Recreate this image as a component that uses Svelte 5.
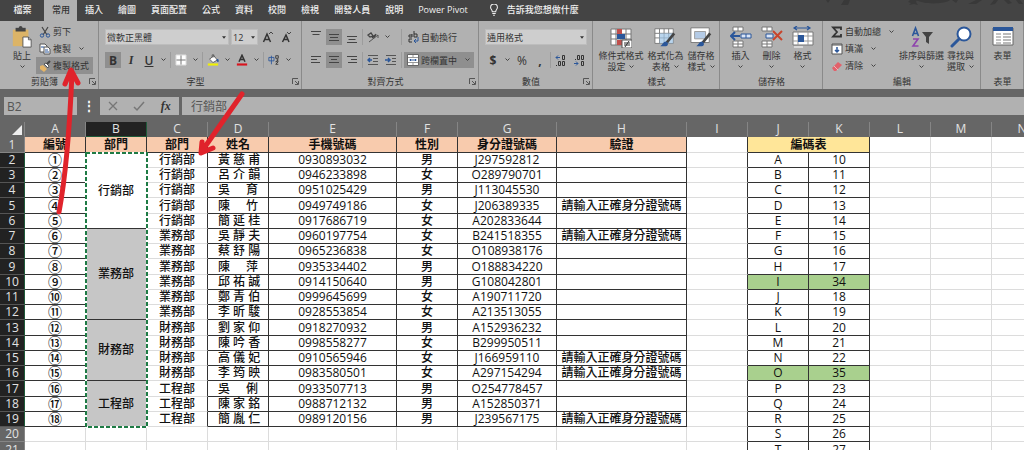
<script>
    const tabs = ['檔案', '常用', '插入', '繪圖', '頁面配置', '公式', '資料', '校閱', '檢視', '開發人員', '說明', 'Power Pivot']
    const columns = ['A', 'B', 'C', 'D', 'E', 'F', 'G', 'H', 'I', 'J', 'K', 'L', 'M', 'N']
    const wrong = '請輸入正確身分證號碼'

    const people = [
        ['①', '行銷部', '黃 慈 甫', '0930893032', '男', 'J297592812', ''],
        ['②', '行銷部', '呂 介 韻', '0946233898', '女', 'O289790701', ''],
        ['③', '行銷部', '吳 育', '0951025429', '男', 'J113045530', ''],
        ['④', '行銷部', '陳 竹', '0949749186', '女', 'J206389335', wrong],
        ['⑤', '行銷部', '簡 延 桂', '0917686719', '女', 'A202833644', ''],
        ['⑥', '業務部', '吳 靜 夫', '0960197754', '女', 'B241518355', wrong],
        ['⑦', '業務部', '蔡 舒 陽', '0965236838', '女', 'O108938176', ''],
        ['⑧', '業務部', '陳 萍', '0935334402', '男', 'O188834220', ''],
        ['⑨', '業務部', '邱 祐 誠', '0914150640', '男', 'G108042801', ''],
        ['⑩', '業務部', '鄭 青 伯', '0999645699', '女', 'A190711720', ''],
        ['⑪', '業務部', '李 昕 駿', '0928553854', '女', 'A213513055', ''],
        ['⑫', '財務部', '劉 家 仰', '0918270932', '男', 'A152936232', ''],
        ['⑬', '財務部', '陳 吟 香', '0998558277', '女', 'B299950511', ''],
        ['⑭', '財務部', '高 儀 妃', '0910565946', '女', 'J166959110', wrong],
        ['⑮', '財務部', '李 筠 映', '0983580501', '女', 'A297154294', wrong],
        ['⑯', '工程部', '吳 俐', '0933507713', '男', 'O254778457', ''],
        ['⑰', '工程部', '陳 家 銘', '0988712132', '男', 'A152850371', ''],
        ['⑱', '工程部', '簡 胤 仁', '0989120156', '男', 'J239567175', wrong],
    ]

    // first row of each merged cell in column B
    const merged = { 0: 5, 5: 6, 11: 4, 15: 3 }

    const codes = [
        ['A', 10], ['B', 11], ['C', 12], ['D', 13], ['E', 14], ['F', 15], ['G', 16],
        ['H', 17], ['I', 34], ['J', 18], ['K', 19], ['L', 20], ['M', 21], ['N', 22],
        ['O', 35], ['P', 23], ['Q', 24], ['R', 25], ['S', 26], ['T', 27],
    ]

    const blue = '#2b579a'
    const gridIcon = '<path d="M1 3h20v16H1z" fill="#fff" stroke="#777"/><path d="M1 8h20M1 13h20M6 3v16M11 3v16M16 3v16" stroke="#777" fill="none"/>'
    const brush = `<path d="M22 8l-8 10" stroke="#444" stroke-width="3"/><path d="M7 22c2-1 3-5 6-5 3 1 3 5 0 5z" fill="${blue}"/>`

    const icons = {
        paste: ['0 0 22 24', '<path d="M1 4h17v18H1z" fill="#dcb467"/><path d="M4 2h11v4H4z" fill="#444"/><circle cx="9.500" cy="2" r="2" fill="#444"/><path d="M12 12h6l3 3v8h-9z" fill="#fff" stroke="#555"/><path d="M18 12v3h3" fill="none" stroke="#555"/>'],
        cut: ['0 0 12 12', `<path d="M3 1l5 8M9 1L4 9" stroke="#444" stroke-width="1.200"/><circle cx="3" cy="9.500" r="1.700" fill="none" stroke="${blue}"/><circle cx="9" cy="9.500" r="1.700" fill="none" stroke="${blue}"/>`],
        copy: ['0 0 12 12', `<path d="M1 1h5l2 2v6H1z" fill="#fff" stroke="#555"/><path d="M5 4h4l2 2v5H5z" fill="#fff" stroke="#555"/><path d="M6 7h3M6 9h4M2 4h3" stroke="${blue}"/>`],
        painter: ['0 0 12 12', '<path d="M1 6l3-1 4 4-3 3-4-3z" fill="#e5b567"/><path d="M5 4l4 4 1-2-3-3z" fill="#fff" stroke="#555"/><path d="M8 4l3-3" stroke="#444" stroke-width="2"/>'],
        borders: ['0 0 12 12', '<path d="M1 1h10v10H1z" fill="#fff"/><path d="M6 1v10M1 6h10" stroke="#777"/><path d="M1 1h10v10H1z" fill="none" stroke="#ddd"/>'],
        fill: ['0 0 14 14', '<path d="M3 6l5-4 4 5-5 3z" fill="#fff" stroke="#555"/><path d="M6 4V1h2v3" fill="none" stroke="#555"/><path d="M12 6l1 3" stroke="#2b579a" stroke-width="2"/><path d="M1 11h12v2.500H1z" fill="#f1f100"/>'],
        fontColor: ['0 0 14 14', '<path d="M3.500 9L7 1.500 10.500 9M5 6.500h4" fill="none" stroke="#333" stroke-width="1.800"/><path d="M1 11h12v2.500H1z" fill="#d9141e"/>'],
        phonetic: ['0 0 14 14', `<path d="M1 4h6v4H1zM4 2v10" fill="none" stroke="${blue}"/><path d="M9 2h3v3H9zM10 6l2 1-3 2h3l-3 3h3" fill="none" stroke="#333"/>`],
        grow: ['0 0 12 12', '<path d="M1.500 11L5 3l3.500 8M3 8.500h4" fill="none" stroke="#333" stroke-width="1.500"/><path d="M7 3l2-2 2 2" fill="none" stroke="#444"/>'],
        shrink: ['0 0 12 12', '<path d="M2.500 11L6 4l3 7M4 8.500h4" fill="none" stroke="#333" stroke-width="1.500"/><path d="M7 1l2 2 2-2" fill="none" stroke="#444"/>'],
        top: ['0 0 12 12', '<path d="M1 .5h10M2.500 3.500h7" stroke="#444"/>'],
        middle: ['0 0 12 12', '<path d="M1 3.500h10M2 6.500h8M1 9.500h10" stroke="#444"/>'],
        bottom: ['0 0 12 12', '<path d="M1 5.500h10M2.500 8.500h7M1 11.500h10" stroke="#444"/>'],
        left: ['0 0 12 12', '<path d="M1 2.500h10M1 5.500h6M1 8.500h9" stroke="#444"/>'],
        center: ['0 0 12 12', '<path d="M1 2.500h10M3 5.500h6M1 8.500h10" stroke="#444"/>'],
        right: ['0 0 12 12', '<path d="M1 2.500h10M5 5.500h6M2 8.500h9" stroke="#444"/>'],
        rotate: ['0 0 12 12', '<path d="M1 4l3-2 2 3-3 1zM5 7l3-3M7 7l2-4" fill="none" stroke="#444" stroke-width="1.300"/><path d="M2 11l9-7M11 4v3" fill="none" stroke="#555"/>'],
        outdent: ['0 0 12 12', `<path d="M1 1.500h10M6 4.500h5M6 7.500h5M1 10.500h10" stroke="#555"/><path d="M5 6H1M3 4L1 6l2 2" fill="none" stroke="${blue}" stroke-width="1.500"/>`],
        indent: ['0 0 12 12', `<path d="M1 1.500h10M7 4.500h4M7 7.500h4M1 10.500h10" stroke="#555"/><path d="M0 6h5M3 4l2 2-2 2" fill="none" stroke="${blue}" stroke-width="1.500"/>`],
        wrap: ['0 0 12 12', `<path d="M5 3v3H2V4h3M7 0v6h3V3H7M5 8H2v3h3" fill="none" stroke="#333"/><path d="M11 6v4H7M9 8l-2 2 2 2" fill="none" stroke="${blue}"/>`],
        merge: ['0 0 12 12', `<path d="M.5 .5h11v11H.5z" fill="#fff" stroke="#666"/><path d="M1 3.500h10M1 8.500h10M6 1v2M6 9v2" stroke="#999"/><path d="M2.500 6h7M4 5L3 6l1 1M8 5l1 1-1 1" fill="none" stroke="${blue}"/>`],
        incDecimal: ['0 0 12 12', `<path d="M1 3.500h4M3 1.500l-2 2 2 2" fill="none" stroke="${blue}"/><path d="M7.500 1.500h2v4h-2zM3.500 7.500h2v4h-2zM7.500 7.500h2v4h-2z" fill="none" stroke="#333"/><path d="M1 11.500h1" stroke="#333"/>`],
        decDecimal: ['0 0 12 12', `<path d="M1 9.500h4M3 7.500l2 2-2 2" fill="none" stroke="${blue}"/><path d="M4.500 1.500h2v4h-2zM8.500 1.500h2v4h-2zM8.500 7.500h2v4h-2z" fill="none" stroke="#333"/><path d="M2 5.500h1" stroke="#333"/>`],
        conditional: ['0 0 22 22', gridIcon + `<path d="M7 3h5v5H7zM7 14h5v5H7z" fill="#c0504d"/><path d="M7 8h8v5H7z" fill="${blue}"/><path d="M12 14h10v8H12z" fill="#fff" stroke="#555"/><path d="M14 17h6M14 19h6M19 15l-4 6" stroke="#333"/>`],
        tableFormat: ['0 0 24 24', gridIcon + `<path d="M6 8h15v11H6z" fill="#9dc3e6" opacity=".7"/>${brush}`],
        cellStyles: ['0 0 24 24', `<path d="M1 2h20v16H1z" fill="#fff" stroke="#777"/><path d="M5 6h12v8H5z" fill="#b4cbe6" stroke="#999"/>${brush}`],
        insert: ['0 0 22 22', `<path d="M3 1h10v4H3zM3 15h10v6H3zM8 1v4M8 15v6M3 18h10" fill="#fff" stroke="#777"/><path d="M11 8h10v4H11zM16 8v4" fill="#dbe5f5" stroke="${blue}"/><path d="M10 10H2M5 6l-4 4 4 4" fill="none" stroke="${blue}" stroke-width="2"/>`],
        remove: ['0 0 22 22', `<path d="M1 1h10v4H1zM1 15h10v6H1zM6 1v4M6 15v6M1 18h10" fill="#fff" stroke="#777"/><path d="M5 8h7v4H5z" fill="#dbe5f5" stroke="${blue}"/><path d="M12 5l9 9M21 5l-9 9" stroke="#c8452c" stroke-width="2"/>`],
        format: ['0 0 22 22', `<path d="M2 2h16M5 0L2 2l3 2M15 0l3 2-3 2" fill="none" stroke="${blue}" stroke-width="1.200"/><path d="M1 6h20v13H1z" fill="#fff" stroke="#777"/><path d="M1 10h20M1 15h20M6 6v13M16 6v13" stroke="#999"/><path d="M6 9h6v7H6z" fill="${blue}"/><path d="M2 21h9" stroke="#fff"/>`],
        sum: ['0 0 12 12', '<path d="M10 4V1.500H2L6 6l-4 4.500h8V8" fill="none" stroke="#333" stroke-width="1.800"/>'],
        fillDown: ['0 0 12 12', `<path d="M1 1h10v10H1z" fill="#fff" stroke="#555"/><path d="M1 2h10" stroke="#555"/><path d="M6 4v5M4 7l2 2 2-2" fill="none" stroke="${blue}" stroke-width="1.500"/>`],
        clear: ['0 0 12 12', '<path d="M1 8l6-6 4 3-6 6H3z" fill="#e2616b"/><path d="M3 6l4 4" stroke="#f3b4b8"/>'],
        sort: ['0 0 22 22', `<path d="M1.500 10L4.500 2l3 8M2.500 7.500h4" fill="none" stroke="${blue}" stroke-width="1.600"/><path d="M2 13h5l-5 7h5.500" fill="none" stroke="#8e44ad" stroke-width="1.600"/><path d="M11 6h11l-4 5v7l-3-2v-5z" fill="#444"/>`],
        find: ['0 0 22 22', `<circle cx="14" cy="8" r="6.500" fill="#fff" stroke="${blue}" stroke-width="2"/><path d="M9 13l-7 7" stroke="${blue}" stroke-width="3" stroke-linecap="round"/>`],
        form: ['0 0 22 22', `<path d="M1 2h20v17H1z" fill="#fff" stroke="#666"/><path d="M1 1h20v4H1z" fill="${blue}"/><path d="M4 8h5M4 11h5M4 14h5M4 17h5" stroke="#888"/><path d="M11 8h8M11 11h8M11 14h8M11 17h8" stroke="#bbb" stroke-width="2"/>`],
        bulb: ['0 0 12 14', '<path d="M4 9C4 7 2 6 2 4a4 4 0 018 0c0 2-2 3-2 5zM4 11h4M5 13h2" fill="none" stroke="#f0f0f0" stroke-width="1.200"/>'],
        cancel: ['0 0 12 12', '<path d="M2 2l8 8M10 2l-8 8" stroke="#777" stroke-width="1.300"/>'],
        check: ['0 0 12 12', '<path d="M1 7l3 3 7-8" fill="none" stroke="#777" stroke-width="1.500"/>'],
    }

    let cell = $state('行銷部')
    let name = $state('B2')
</script>

{#snippet icon(key)}
    <svg class="icon" viewBox={icons[key][0]} aria-hidden="true">{@html icons[key][1]}</svg>
{/snippet}

{#snippet caret()}
    <svg class="caret" viewBox="0 0 5 4" aria-hidden="true"><path d="M.5 .5l2 2 2-2" fill="none" stroke="#444" /></svg>
{/snippet}

{#snippet tool(key, label, active)}
    <button class="tool" class:active aria-label={label}>{@render icon(key)}</button>
{/snippet}

{#snippet more(label)}
    <button class="more" aria-label={label}>{@render caret()}</button>
{/snippet}

{#snippet command(key, label, drop, active)}
    <button class="command" class:active>
        {@render icon(key)}<span>{label}</span>{#if drop}{@render caret()}{/if}
    </button>
{/snippet}

{#snippet big(key, first, second, drop)}
    <button class="big">
        {@render icon(key)}
        <span>{first}</span>
        <span class="second">{second}{#if drop}{@render caret()}{/if}</span>
    </button>
{/snippet}

{#snippet dropdown(label, value)}
    <span class="dropdown">
        <select aria-label={label}><option>{value}</option></select>
        <svg viewBox="0 0 5 3" aria-hidden="true"><path d="M0 0h5L2.500 3z" fill="#333" /></svg>
    </span>
{/snippet}

{#snippet caption(text, launcher)}
    <div class="caption">
        <span>{text}</span>
        {#if launcher}
            <button class="launcher" aria-label="{text}設定">
                <svg viewBox="0 0 7 7" aria-hidden="true"><path d="M.5 6V.5H6M3 3l3 3M6.500 3v3.500H3" fill="none" stroke="#555" /></svg>
            </button>
        {/if}
    </div>
{/snippet}

<div class="app">
    <nav class="tabs">
        {#each tabs as tab, i}
            <button class:current={i === 1}>{tab}</button>
        {/each}
        <button class="tell">{@render icon('bulb')}告訴我您想做什麼</button>
        <svg class="doodle" viewBox="0 0 200 20" aria-hidden="true">
            <path d="M20 0l-3 5h7l2-5zM86 0l-2 2 3 1-2 2 5-1 4 1-2-3 1-2zM6 0h-4l2 3zM92 0h34c-4 4-26 5-34 0z" />
            <path d="M128 0l4 3 2-3zM144 4l8-4h6l-6 4zM170 0l-4 5 5-1 3-4zM180 0l4 4 4-1-3-3zM192 0l3 4h4l-3-4z" />
        </svg>
    </nav>

    <div class="ribbon">
        <section>
            <div class="body clipboard">
                {@render big('paste', '貼上', '', true)}
                <div class="stack">
                    {@render command('cut', '剪下')}
                    {@render command('copy', '複製', true)}
                    {@render command('painter', '複製格式', false, true)}
                </div>
            </div>
            {@render caption('剪貼簿', true)}
        </section>

        <section>
            <div class="body rows">
                <div class="row">
                    <div class="font-name">{@render dropdown('字型', '微軟正黑體')}</div>
                    <div class="font-size">{@render dropdown('字型大小', '12')}</div>
                    {@render tool('grow', '放大字型')}
                    {@render tool('shrink', '縮小字型')}
                </div>
                <div class="row">
                    <button class="tool active bold">B</button>
                    <button class="tool italic">I</button>
                    <button class="tool underline">U</button>
                    {@render more('底線')}
                    <i class="sep"></i>
                    {@render tool('borders', '框線')}
                    {@render more('更多框線')}
                    <i class="sep"></i>
                    {@render tool('fill', '填滿色彩')}
                    {@render more('更多填滿色彩')}
                    {@render tool('fontColor', '字型色彩')}
                    {@render more('更多字型色彩')}
                    <i class="sep"></i>
                    {@render tool('phonetic', '注音')}
                    {@render more('更多注音')}
                </div>
            </div>
            {@render caption('字型', true)}
        </section>

        <section>
            <div class="body rows">
                <div class="row">
                    {@render tool('top', '靠上對齊')}
                    {@render tool('middle', '置中對齊', true)}
                    {@render tool('bottom', '靠下對齊')}
                    <i class="sep"></i>
                    {@render tool('rotate', '方向')}
                    <span class="slot">{@render more('更多方向')}</span>
                    <i class="sep"></i>
                    {@render command('wrap', '自動換行')}
                </div>
                <div class="row">
                    {@render tool('left', '靠左對齊')}
                    {@render tool('center', '置中', true)}
                    {@render tool('right', '靠右對齊')}
                    <i class="sep"></i>
                    {@render tool('outdent', '減少縮排')}
                    {@render tool('indent', '增加縮排')}
                    <i class="sep"></i>
                    {@render command('merge', '跨欄置中', true, true)}
                </div>
            </div>
            {@render caption('對齊方式', true)}
        </section>

        <section>
            <div class="body rows">
                <div class="row">
                    <div class="number-format">{@render dropdown('數值格式', '通用格式')}</div>
                </div>
                <div class="row">
                    <button class="tool bold">$</button>
                    {@render more('會計格式')}
                    <button class="tool">%</button>
                    <button class="tool bold">,</button>
                    <i class="sep"></i>
                    {@render tool('incDecimal', '增加小數位數')}
                    {@render tool('decDecimal', '減少小數位數')}
                </div>
            </div>
            {@render caption('數值', true)}
        </section>

        <section>
            <div class="body bigs">
                {@render big('conditional', '條件式格式', '設定', true)}
                {@render big('tableFormat', '格式化為', '表格', true)}
                {@render big('cellStyles', '儲存格', '樣式', true)}
            </div>
            {@render caption('樣式')}
        </section>

        <section>
            <div class="body bigs">
                {@render big('insert', '插入', '', true)}
                {@render big('remove', '刪除', '', true)}
                {@render big('format', '格式', '', true)}
            </div>
            {@render caption('儲存格')}
        </section>

        <section>
            <div class="body editing">
                <div class="stack">
                    {@render command('sum', '自動加總', true)}
                    {@render command('fillDown', '填滿', true)}
                    {@render command('clear', '清除', true)}
                </div>
                {@render big('sort', '排序與篩選', '', true)}
                {@render big('find', '尋找與', '選取', true)}
            </div>
            {@render caption('編輯')}
        </section>

        <section>
            <div class="body bigs">
                {@render big('form', '表單', '')}
            </div>
            {@render caption('表單')}
        </section>
    </div>

    <div class="formula-bar">
        <input class="name-box" aria-label="名稱方塊" bind:value={name} />
        <span class="grip">⋮</span>
        <div class="formula-tools">
            {@render tool('cancel', '取消')}
            {@render tool('check', '輸入')}
            <button class="tool fx">fx</button>
        </div>
        <input class="formula" aria-label="資料編輯列" bind:value={cell} />
    </div>

    <div class="sheet">
        <table>
            <colgroup>
                <col class="head" />
                {#each columns as c}
                    <col class={c} />
                {/each}
            </colgroup>
            <thead>
                <tr>
                    <th class="corner"><svg viewBox="0 0 10 10" aria-hidden="true"><path d="M10 0v10H0z" fill="#eee" /></svg></th>
                    {#each columns as c}
                        <th class:selected={c === 'B'}>{c}</th>
                    {/each}
                </tr>
            </thead>
            <tbody>
                <tr>
                    <th>1</th>
                    <td class="title">編號</td>
                    <td class="title">部門</td>
                    <td class="title">部門</td>
                    <td class="title">姓名</td>
                    <td class="title">手機號碼</td>
                    <td class="title">性別</td>
                    <td class="title">身分證號碼</td>
                    <td class="title">驗證</td>
                    <td class="edge"></td>
                    <td class="title yellow" colspan="2">編碼表</td>
                    <td></td><td></td><td></td>
                </tr>
                {#each codes as [letter, code], i}
                    {@const p = people[i]}
                    <tr>
                        <th class:selected={p}>{i + 2}</th>
                        {#if p}
                            <td class="box number">{p[0]}</td>
                            {#if merged[i]}
                                <td class="box" class:shaded={i > 0} rowspan={merged[i]}>{p[1]}</td>
                            {/if}
                            <td class="edge">{p[1]}</td>
                            <td class="box name">{p[2]}</td>
                            <td class="box">{p[3]}</td>
                            <td class="box">{p[4]}</td>
                            <td class="box">{p[5]}</td>
                            <td class="box">{p[6]}</td>
                        {:else}
                            {#each columns.slice(0, 8) as _}
                                <td></td>
                            {/each}
                        {/if}
                        <td class="edge"></td>
                        <td class="box" class:green={code > 33}>{letter}</td>
                        <td class="box" class:green={code > 33}>{code}</td>
                        <td></td><td></td><td></td>
                    </tr>
                {/each}
            </tbody>
        </table>
        <svg class="ants" aria-hidden="true">
            <rect width="100%" height="100%" stroke="#fff" />
            <rect width="100%" height="100%" stroke="#1e7b45" stroke-dasharray="4 2" />
        </svg>
    </div>

    <svg class="arrows" viewBox="0 0 260 220" aria-hidden="true">
        <path d="M59 212C67 170 70 120 72 73M65 84l6-14 7 13" />
        <path d="M242 94L202 151M202 142l-1 11 12-5" />
    </svg>
</div>

<style>
    :global(body) {
        background: #fff;
    }

    .app {
        position: relative;
        display: flex;
        flex-direction: column;
        height: 100vh;
        overflow: hidden;
        background: #666;
        color: #333;
        font-family: 'Open Sans', 'Noto Sans CJK TC', sans-serif;
        font-size: 9px;
        line-height: 11px;
    }

    button {
        padding: 0;
        border: 0;
        background: none;
        color: inherit;
        font: inherit;
        white-space: nowrap;
    }

    svg {
        display: block;
    }

    .icon {
        width: 12px;
        height: 12px;
        flex: none;
    }

    .caret {
        width: 5px;
        height: 4px;
        flex: none;
    }

    /* tabs */
    .tabs {
        display: flex;
        height: 21px;
        background: #444;
        color: #f0f0f0;
        font-weight: 500;
    }

    .tabs button {
        padding: 0 7px 2px 8px;
    }

    .tabs button:first-child {
        width: 44px;
    }

    .tabs .current {
        background: #b1b1b1;
        color: #333;
    }

    .tabs .tell {
        display: flex;
        align-items: center;
        gap: 7px;
        padding-left: 13px;
    }

    .doodle {
        width: 200px;
        height: 20px;
        margin-left: auto;
        fill: #393939;
    }

    /* ribbon */
    .ribbon {
        display: grid;
        grid-template-columns: 99fr 203fr 177fr 114fr 127fr 103fr 158fr 43fr;
        height: 68px;
        background: #b1b1b1;
    }

    section {
        display: flex;
        flex-direction: column;
        min-width: 0;
        box-shadow: inset -1px 0 #8a8a8a;
    }

    .body {
        display: flex;
        height: 53px;
        box-sizing: border-box;
    }

    .clipboard {
        padding: 2px 0 0 9px;
        gap: 1px;
    }

    .stack {
        display: flex;
        flex-direction: column;
        align-items: flex-start;
    }

    .command {
        display: flex;
        align-items: center;
        gap: 2px;
        height: 17px;
        padding: 0 4px 0 3px;
    }

    .command .caret {
        margin-left: 6px;
    }

    .active {
        background: #8f8f8f;
    }

    .big {
        display: flex;
        flex-direction: column;
        align-items: center;
        padding-top: 3px;
    }

    .big .icon {
        width: 22px;
        height: 22px;
        margin-bottom: 2px;
    }

    .second {
        display: flex;
        align-items: center;
        gap: 4px;
        height: 11px;
    }

    .clipboard .big {
        width: 26px;
    }

    .bigs {
        justify-content: center;
        gap: 4px;
        padding-top: 2px;
    }

    .bigs .big {
        min-width: 27px;
    }

    .editing {
        gap: 3px;
        padding: 2px 0 0 5px;
    }

    .editing .stack {
        width: 68px;
    }

    .rows {
        flex-direction: column;
        gap: 7px;
        padding: 8px 0 0 6px;
    }

    .row {
        display: flex;
        gap: 2px;
        height: 16px;
    }

    .row .command {
        height: 16px;
    }

    .tool {
        display: grid;
        place-items: center;
        width: 16px;
        height: 16px;
        flex: none;
        font-size: 12px;
    }

    .more {
        display: grid;
        place-items: center;
        width: 9px;
    }

    .slot {
        display: flex;
        width: 16px;
    }

    .sep {
        width: 1px;
        background: #9c9c9c;
    }

    .bold {
        font-weight: 700;
    }

    .italic {
        font-family: 'Liberation Serif', serif;
        font-style: italic;
        font-weight: 700;
    }

    .underline {
        font-weight: 600;
        text-decoration: underline;
    }

    .dropdown {
        display: grid;
        align-items: center;
    }

    .dropdown > * {
        grid-area: 1 / 1;
    }

    .dropdown svg {
        width: 4px;
        height: 3px;
        margin-right: 3px;
        justify-self: end;
        pointer-events: none;
    }

    select {
        width: 100%;
        height: 16px;
        padding: 0 1px;
        border: 1px solid #bdbdbd;
        border-radius: 0;
        appearance: none;
        background: #cecece;
        color: #333;
        font: inherit;
    }

    .font-name {
        width: 124px;
    }

    .font-size {
        width: 27px;
    }

    .number-format {
        width: 102px;
    }

    .caption {
        display: flex;
        align-items: center;
        height: 15px;
    }

    .caption span {
        flex: 1;
        text-align: center;
    }

    .launcher {
        width: 7px;
        margin-right: 3px;
    }

    .launcher svg {
        width: 7px;
        height: 7px;
    }

    /* formula bar */
    .formula-bar {
        display: flex;
        height: 18px;
        padding: 8px 0 7px 4px;
        font-size: 12px;
    }

    input {
        box-sizing: border-box;
        border: 0;
        background: #b1b1b1;
        color: #555;
        font: inherit;
    }

    .name-box {
        width: 73px;
        padding: 0 3px;
    }

    .grip {
        width: 23px;
        color: #fff;
        font-weight: 700;
        line-height: 18px;
        text-align: center;
    }

    .formula-tools {
        display: flex;
        align-items: center;
        justify-content: space-around;
        width: 79px;
        margin-right: 3px;
        background: #b1b1b1;
    }

    .fx {
        font-family: 'Liberation Serif', serif;
        font-style: italic;
        font-weight: 700;
    }

    .formula {
        flex: 1;
        min-width: 0;
        padding: 0 9px;
    }

    /* sheet */
    .sheet {
        position: relative;
        flex: 1;
        min-height: 0;
        overflow: hidden;
        background: #fff;
    }

    table {
        width: 1053px;
        border-spacing: 0;
        table-layout: fixed;
        color: #111;
        font-size: 12px;
        font-weight: 500;
        line-height: 14px;
    }

    col {
        width: 61px;
    }

    .head {
        width: 25px;
    }

    .E {
        width: 128px;
    }

    .G {
        width: 99px;
    }

    .H {
        width: 130px;
    }

    tr {
        height: 15px;
    }

    tbody tr:nth-child(4n + 1) {
        height: 16px;
    }

    td,
    th {
        box-sizing: border-box;
        padding: 0;
        border: 0 solid #dcdcdc;
        border-width: 0 1px 1px 0;
        text-align: center;
        white-space: nowrap;
    }

    th {
        border-color: #858585;
        background: #666;
        color: #e2e2e2;
        font-weight: 400;
    }

    thead th {
        border-bottom-color: #666;
    }

    th.selected {
        border-color: #1e5b3a;
        background: #222;
    }

    tbody th.selected {
        border-bottom-color: #555;
    }

    .corner svg {
        width: 10px;
        height: 10px;
        margin: 2px 2px 0 auto;
    }

    .box,
    .title {
        border-color: #333;
    }

    .edge {
        border-right-color: #333;
    }

    .title {
        background: #f8cbad;
        font-weight: 600;
    }

    .yellow {
        background: #ffe699;
    }

    .green {
        background: #a9d08e;
    }

    .shaded {
        background: #c6c6c6;
    }

    .number {
        font-size: 14px;
    }

    .name {
        padding: 0 10px;
        text-align-last: justify;
    }

    /* copy outline round the merged cells */
    .ants {
        position: absolute;
        top: 31px;
        left: 86px;
        width: 61px;
        height: 274px;
        overflow: visible;
    }

    .ants rect {
        fill: none;
        stroke-width: 2;
    }

    .arrows {
        position: absolute;
        top: 0;
        left: 0;
        width: 260px;
        height: 220px;
        fill: none;
        stroke: #e0232b;
        stroke-width: 5;
        stroke-linecap: round;
        stroke-linejoin: round;
        pointer-events: none;
    }
</style>
